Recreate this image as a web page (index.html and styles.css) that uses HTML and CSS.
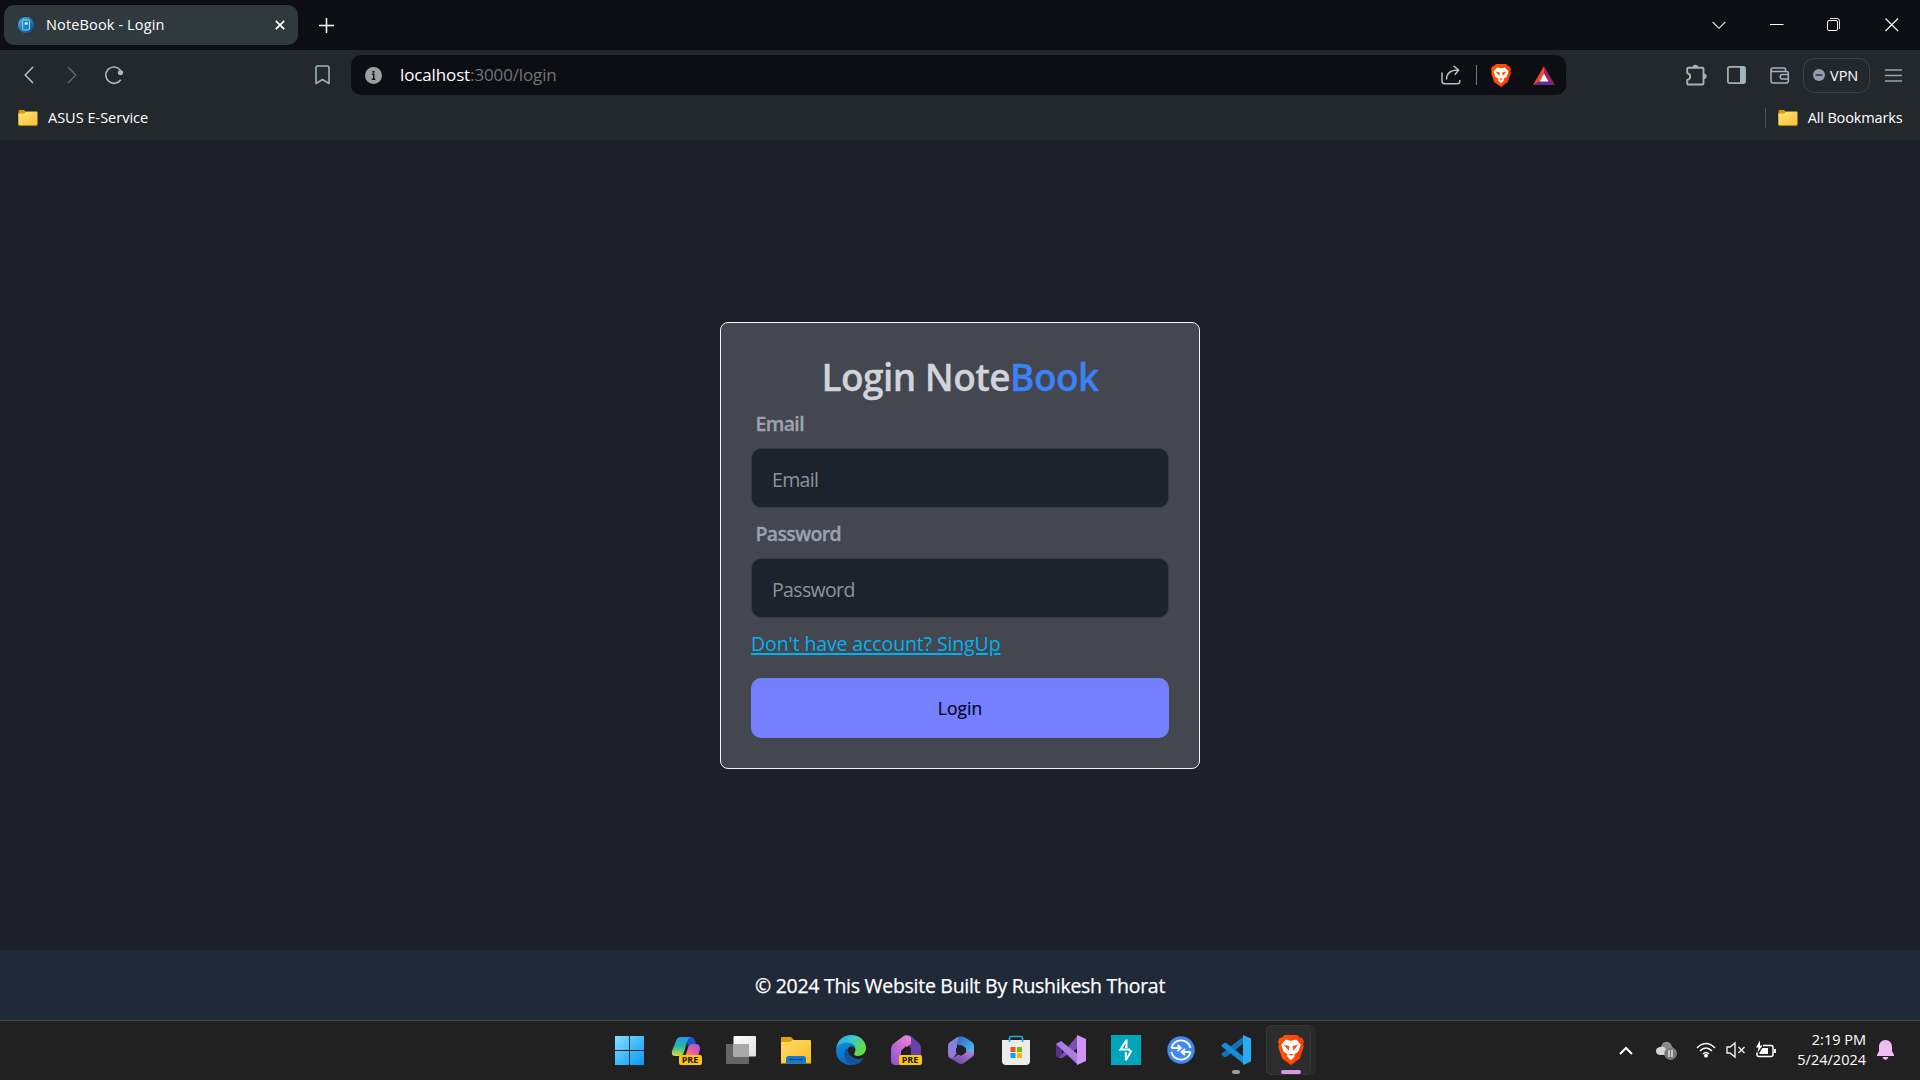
FILE: index.html
```html
<!DOCTYPE html>
<html lang="en">
<head>
<meta charset="utf-8">
<title>NoteBook - Login</title>
<link rel="stylesheet" href="styles.css">
</head>
<body>
<div class="screen">
  <header class="browser">
    <div class="tabstrip">
      <div class="tab">
        <svg class="favicon" width="16" height="16" viewBox="0 0 16 16"><defs><linearGradient id="fav" x1="0" y1="0" x2="1" y2="1"><stop offset="0" stop-color="#45b8ea"/><stop offset="1" stop-color="#05418c"/></linearGradient></defs><circle cx="8" cy="8" r="8" fill="url(#fav)"/><rect x="4.7" y="3" width="6.8" height="10" rx="1" fill="#1686bd" stroke="#8fd6e6"/><rect x="6.7" y="5.3" width="3" height="2.4" fill="#d8f3fa"/></svg>
        <span class="t tab-title">NoteBook - Login</span>
        <svg class="tab-close" width="10" height="10" viewBox="0 0 10 10"><path d="M.8.8l8.4 8.4M9.2.8L.8 9.2" stroke="#fff" stroke-width="1.7"/></svg>
      </div>
      <svg class="new-tab" width="15" height="15" viewBox="0 0 15 15"><path d="M7.5 0v15M0 7.5h15" stroke="#fff" stroke-width="1.5"/></svg>
      <div class="window-controls">
        <svg width="14" height="14" viewBox="0 0 14 14"><path d="M.7 4l6.3 6.3L13.3 4" fill="none" stroke="#e4e4e6" stroke-width="1.1"/></svg>
        <svg width="14" height="14" viewBox="0 0 14 14"><path d="M0 6.5h13.500" stroke="#fff"/></svg>
        <svg width="14" height="14" viewBox="0 0 14 14"><rect x=".5" y="2.5" width="10" height="10" rx="1.5" fill="none" stroke="#fff"/><path d="M3 .5h7q2.500 0 2.500 2.500v8" fill="none" stroke="#e0e0e0"/></svg>
        <svg width="14" height="14" viewBox="0 0 14 14"><path d="M.5.5l12.500 12.500M13 .5L.5 13" stroke="#f4f4f4" stroke-width="1.200"/></svg>
      </div>
    </div>
    <div class="toolbar">
      <svg class="nav-back" width="10" height="18" viewBox="0 0 10 18"><path d="M9 1L1.200 9 9 17" fill="none" stroke="#b0c2cb" stroke-width="1.500"/></svg>
      <svg class="nav-forward" width="10" height="18" viewBox="0 0 10 18"><path d="M1 1l7.800 8L1 17" fill="none" stroke="#5b666c" stroke-width="1.500"/></svg>
      <svg class="nav-reload" width="20" height="20" viewBox="0 0 20 20"><path d="M16.800 14.700A8.200 8.200 0 1 1 16.300 4.900" fill="none" stroke="#a9bac3" stroke-width="1.600"/><circle cx="16.500" cy="7.500" r="2.600" fill="#a9bac3"/></svg>
      <svg class="nav-bookmark" width="15" height="20" viewBox="0 0 15 20"><path d="M1 3Q1 1 3 1h9q2 0 2 2v15.500l-6.500-4L1 18.500z" fill="none" stroke="#a0b2bc" stroke-width="1.600" stroke-linejoin="round"/></svg>
      <div class="address">
        <svg class="info" width="17" height="17" viewBox="0 0 17 17"><circle cx="8.500" cy="8.500" r="8.500" fill="#9d9fa6"/><circle cx="8.500" cy="4.800" r="1.100" fill="#0d0e13"/><path d="M7 7.300h1.700v5M6.800 12.200h3.600" fill="none" stroke="#0d0e13" stroke-width="1.400"/></svg>
        <span class="t url"><span class="url-host">localhost</span>:3000/login</span>
        <svg class="share" width="20" height="20" viewBox="0 0 20 20"><path d="M1 7.500V16q0 2.800 2.800 2.800h12.400q2.600 0 2.600-2.800v-1M5.500 14.500C5.500 8 9 5 17 5M12.500 .8L17.700 5l-3.900 4.800" fill="none" stroke="#b9babd" stroke-width="1.500"/></svg>
        <span class="address-divider"></span>
        <svg class="brave-shield" width="20" height="23" viewBox="0 0 20 23"><use href="#lion"/></svg>
        <svg class="bat" width="22" height="19" viewBox="0 0 22 19"><path d="M11 0L0 19l7-4 4-7z" fill="#ff4724"/><path d="M11 0v8l4 7 7 4z" fill="#9e1f63"/><path d="M0 19l7-4h8l7 4z" fill="#662d91"/><path d="M11 7.500l4.500 8h-9z" fill="#fff"/></svg>
      </div>
      <svg class="puzzle" width="21" height="21" viewBox="0 0 21 21"><path d="M2.200 2.800h14.300q1 0 1 1v14.700q0 1-1 1H2.200q-1 0-1-1v-3.500c4-1 4-6 0-7V3.800q0-1 1-1z" fill="none" stroke="#a2b3bc" stroke-width="1.900" stroke-linejoin="round"/><path d="M6.500 2.600a2.900 2.900 0 0 1 5.800 0zM17.800 8.500a2.800 2.800 0 0 1 0 5.600z" fill="#a2b3bc"/></svg>
      <svg class="panel" width="19" height="18" viewBox="0 0 19 18"><rect x=".9" y=".9" width="17.200" height="16.200" rx="1.500" fill="none" stroke="#a2b3bc" stroke-width="1.700"/><path d="M13 1h5v16h-5z" fill="#a2b3bc"/></svg>
      <svg class="wallet" width="20" height="17" viewBox="0 0 20 17"><path d="M1 3V14q0 2 2 2h13.500q1.800 0 1.800-2V6q0-1.500-1.800-1.500H3Q1 4.500 1 2.700T3 1h11.500q1 0 1 1v2M18.300 7.400h-5.800q-2.300 0-2.300 2.300t2.300 2.300h5.800z" fill="none" stroke="#a2b3bc" stroke-width="1.500" stroke-linejoin="round"/></svg>
      <div class="vpn"><svg width="12" height="12" viewBox="0 0 12 12"><circle cx="6" cy="6" r="6" fill="#9999b3"/><path d="M2.500 6h7" stroke="#23282c" stroke-width="1.400"/></svg><span class="t vpn-label">VPN</span></div>
      <svg class="menu" width="17" height="13" viewBox="0 0 17 13"><path d="M0 1h17M0 6.500h17M0 12h17" stroke="#93a5ae" stroke-width="1.300"/></svg>
    </div>
    <div class="bookmarks">
      <svg width="20" height="17" viewBox="0 0 20 17"><use href="#folder"/></svg>
      <span class="t bm-asus">ASUS E-Service</span>
      <span class="bookmark-divider"></span>
      <svg width="20" height="17" viewBox="0 0 20 17"><use href="#folder"/></svg>
      <span class="t bm-all">All Bookmarks</span>
    </div>
  </header>

  <main class="page">
    <form class="card">
      <h1 class="title">Login Note<span class="accent">Book</span></h1>
      <label class="label label-email" for="email">Email</label>
      <input class="field" id="email" type="text" placeholder="Email">
      <label class="label label-password" for="password">Password</label>
      <input class="field" id="password" type="password" placeholder="Password">
      <a class="t signup" href="#">Don't have account? SingUp</a>
      <button class="submit" type="button">Login</button>
    </form>
  </main>
  <footer class="footer"><span class="t footer-text">© 2024 This Website Built By Rushikesh Thorat</span></footer>

  <nav class="taskbar">
    <div class="apps">
      <span class="app start"><svg width="30" height="30" viewBox="0 0 30 30"><defs><linearGradient id="win" gradientUnits="userSpaceOnUse" x1="0" y1="0" x2="30" y2="30"><stop offset="0" stop-color="#8be2ff"/><stop offset=".5" stop-color="#43bdf9"/><stop offset="1" stop-color="#0a95fb"/></linearGradient></defs><path d="M1 1h14v14H1zM16 1h14v14H16zM1 16h14v14H1zM16 16h14v14H16z" fill="url(#win)"/></svg></span>
      <span class="app"><svg width="30" height="30" viewBox="0 0 30 30"><defs><linearGradient id="copA" x1="0" y1="0" x2="0" y2="1"><stop offset="0" stop-color="#1e9bf0"/><stop offset=".5" stop-color="#2cb6a0"/><stop offset="1" stop-color="#d6dc3a"/></linearGradient><linearGradient id="copB" x1="1" y1="0" x2="0" y2="1"><stop offset="0" stop-color="#9a55ee"/><stop offset=".5" stop-color="#e458a8"/><stop offset="1" stop-color="#ff9862"/></linearGradient></defs><path d="M15 2h4q4 0 5 4l1 3h-4q-3 0-4 3z" fill="#1558cf"/><path d="M10 2h10q-3 1-4 5l-3 10q-1 4-5 4H4q-4 0-3-5L5 6q1-4 5-4z" fill="url(#copA)"/><path d="M21 9h4q4 0 4 5l-2 8H14l3-9q1-4 4-4z" fill="url(#copB)"/></svg><span class="pre">PRE</span></span>
      <span class="app"><svg width="30" height="30" viewBox="0 0 30 30"><defs><linearGradient id="tv" x1="0" y1="0" x2="1" y2="1"><stop offset="0" stop-color="#fff"/><stop offset="1" stop-color="#ddd"/></linearGradient></defs><rect x="0" y="9" width="23" height="20" rx="1" fill="#656565"/><rect x="7.500" y="1" width="22.500" height="20.500" rx="1" fill="url(#tv)"/><path d="M7.500 9H23v12.500H7.500z" fill="#a9a9a9"/></svg></span>
      <span class="app"><svg width="30" height="30" viewBox="0 0 30 30"><defs><linearGradient id="fe" x1="0" y1="0" x2="1" y2="1"><stop offset="0" stop-color="#ffdc6c"/><stop offset="1" stop-color="#fbbb20"/></linearGradient></defs><path d="M0 3q0-1 1-1h9l3 3-3 5H0z" fill="#dfa006"/><path d="M0 7h9l3-2h17q1 0 1 1v22.500H0z" fill="url(#fe)"/><path d="M5 28.500V24q0-3 3-3h14q3 0 3 3v4.500z" fill="#0f78d1"/><path d="M8.500 24.500h13" stroke="#08447f" stroke-width="1.300"/></svg></span>
      <span class="app"><svg width="30" height="30" viewBox="0 0 30 30"><defs><linearGradient id="edA" x1="0" y1="0" x2="1" y2=".5"><stop offset="0" stop-color="#20a4e3"/><stop offset=".45" stop-color="#35c5d6"/><stop offset="1" stop-color="#69dc43"/></linearGradient><linearGradient id="edB" x1="0" y1="0" x2=".4" y2="1"><stop offset="0" stop-color="#138dd8"/><stop offset="1" stop-color="#0767c2"/></linearGradient></defs><path d="M.3 14C1 5 7.500 0 15 0c9 0 15 6 15 13 0 5-4 8-8.500 8-3 0-4-1.500-3-3 3-5-1-9-7-9S1 12 .3 14z" fill="url(#edA)"/><path d="M.2 14.500C1 10 6 7.500 11 7.500c5.500 0 8.500 3.200 8.500 6.500-1-2-3-3-5-2.500-3 1-4.500 5-3 9 2 5 8 7 13.500 4.500-2 3.500-6 5-10 5C6 30-.8 23 .2 14.500z" fill="url(#edB)"/><path d="M11 13c-5 4-3 14 5 17 5 0 9-2 11.500-7-4 2-9 1-12-1.500-3-2.500-4-5.500-4.500-8.500z" fill="#12539a"/></svg></span>
      <span class="app"><svg width="30" height="30" viewBox="0 0 30 30"><defs><linearGradient id="dh" x1="1" y1="0" x2="0" y2="1"><stop offset="0" stop-color="#f287d8"/><stop offset="1" stop-color="#8b50d0"/></linearGradient></defs><path d="M17 0q2 0 3.500 1.500L28 8q2 2 2 5v16H20V13L13 5z" fill="#6941aa"/><path d="M12 1.500q4-3 8 1v6l-9 8V30H4q-4 0-4-4V14q0-3 2-5z" fill="url(#dh)"/><path d="M10 16l5-5 5 5v6H10z" fill="#211e25"/></svg><span class="pre">PRE</span></span>
      <span class="app"><svg width="30" height="30" viewBox="0 0 30 30"><defs><linearGradient id="mA" x1="0" y1="0" x2="1" y2="1"><stop offset="0" stop-color="#2b5fc4"/><stop offset="1" stop-color="#52d0f5"/></linearGradient><linearGradient id="mB" x1="0" y1="1" x2="1" y2="0"><stop offset="0" stop-color="#5c3b98"/><stop offset="1" stop-color="#bb86dc"/></linearGradient></defs><path d="M10 3Q15-.5 20 3l6 4q2 1 2 4v6q-1 4-5 5l-4-8-8-5z" fill="url(#mA)"/><path d="M10 3q2-1 3-1-2 3-2 7v9l-5 6-2-1q-2-1-2-4v-8q0-3 2-4z" fill="#8f7cdc"/><path d="M2 20q1 3 4 3l12-6 10-1v3q0 2-2 3l-8 6q-3 2-6 0l-8-5q-2-1-2-3z" fill="url(#mB)"/><path d="M15 10l5 3v4.500L15 21l-5-3.500V13z" fill="#202027"/></svg></span>
      <span class="app"><svg width="30" height="30" viewBox="0 0 30 30"><path d="M1 5h28v21q0 4-4 4H5q-4 0-4-4z" fill="#ececec"/><path d="M8.500 7V3q0-1.500 1.500-1.500h10q1.500 0 1.500 1.500v4" fill="none" stroke="#27a5e2" stroke-width="1.700"/><path d="M9.500 12h5v5h-5z" fill="#f25022"/><path d="M16 12h5v5h-5z" fill="#7fba00"/><path d="M9.500 18h5v5h-5z" fill="#00a4ef"/><path d="M16 18h5v5h-5z" fill="#ffb900"/></svg></span>
      <span class="app"><svg width="30" height="30" viewBox="0 0 30 30"><path d="M0 9l3-2 3 1v14l-3 1-3-2z" fill="#533484"/><path d="M3 23l18-22 3 3v8L6 23z" fill="#7650b5"/><path d="M0 9l5-3 19 15v5l-3 3z" fill="#ab7be0"/><path d="M21 0l9 4v22l-9 4z" fill="#d094fa"/></svg></span>
      <span class="app"><svg width="30" height="30" viewBox="0 0 30 30"><path d="M0 0h30v30H0z" fill="#00a5bc"/><path d="M15.500 4.500v7.500h-1.500M15.500 5L9.500 14.500h9.500M14.800 25.500V17M15 25l5-8.500-3-2.500" fill="none" stroke="#fff" stroke-width="2"/></svg></span>
      <span class="app"><svg width="30" height="30" viewBox="0 0 30 30"><circle cx="15" cy="15" r="13.700" fill="#4387f2"/><path d="M5.300 13a10 10 0 0 1 19.400 0M24.700 17a10 10 0 0 1-19.400 0M5.300 13h10M11.500 10l3.500 3-3.500 3M24.700 17h-9M19 14l-3.500 3 3.500 3" fill="none" stroke="#fff" stroke-width="1.800"/></svg></span>
      <span class="app"><svg width="30" height="30" viewBox="0 0 30 30"><path d="M0 19l3 3 2 .3L23 8V1z" fill="#1272b5"/><path d="M0 11l3-3 2-.300L23 22v7z" fill="#168dd5"/><path d="M22 0l8 3.500v23L22 30z" fill="#29aaf2"/></svg><span class="running"></span></span>
      <span class="app active"><svg width="26" height="30" viewBox="0 0 20 23"><use href="#lion"/></svg><span class="focused"></span></span>
    </div>
    <div class="tray">
      <svg class="tray-up" width="14" height="9" viewBox="0 0 14 9"><path d="M1 8l6-6 6 6" fill="none" stroke="#fff" stroke-width="2"/></svg>
      <svg class="tray-cloud" width="21" height="19" viewBox="0 0 21 19"><path d="M5 6C6-1 15-1 16 6q2 1 2 5H6z" fill="#8b8b8b"/><path d="M5 14q-5 0-5-4 0-3.500 4-4 4-1 6 2l5 6z" fill="#d6d6d6"/><circle cx="14.500" cy="12.500" r="6" fill="#777" stroke="#909090" stroke-width=".7"/><path d="M13 9v7M16 9v7" stroke="#fff" stroke-width="1.200"/></svg>
      <svg class="tray-wifi" width="20" height="16" viewBox="0 0 20 16"><path d="M1 6q9-9 18 0M4 9q6-6 12 0M7 12q3-3 6 0" fill="none" stroke="#fff" stroke-width="1.600"/><circle cx="10" cy="13.700" r="1.900" fill="#fff"/></svg>
      <svg class="tray-sound" width="20" height="16" viewBox="0 0 20 16"><path d="M1 5h3l5-4v14l-5-4H1zM12.500 5l6 6M18.500 5l-6 6" fill="none" stroke="#eee" stroke-width="1.400"/></svg>
      <svg class="tray-battery" width="20" height="17" viewBox="0 0 20 17"><path d="M7 3.500h8q2 0 2 2v7q0 2-2 2H3q-2 0-2-2v-2" fill="none" stroke="#fff" stroke-width="1.500"/><path d="M6.500 6H12v6H3.500v-1.500zM18 7h2v4h-2zM4-1.500L0 5.500h2.500l-1 5L6.500 3.500H4z" fill="#fff"/></svg>
      <div class="clock"><span class="t">2:19 PM</span><span class="t">5/24/2024</span></div>
      <svg class="tray-bell" width="17" height="20" viewBox="0 0 17 20"><path d="M8.500 0c4 0 6.500 3 6.500 7v4l2 4v1H0v-1l2-4V7c0-4 2.500-7 6.500-7zM5.500 17h6q-1 3-3 3t-3-3z" fill="#f0bdf3"/></svg>
    </div>
  </nav>
</div>

<svg class="symbols" width="0" height="0">
  <defs>
    <linearGradient id="fold" x1="0" y1="0" x2="1" y2="1"><stop offset="0" stop-color="#ffe47a"/><stop offset="1" stop-color="#fdbf35"/></linearGradient>
    <linearGradient id="brave" x1="0" y1="0" x2="1" y2="0"><stop offset="0" stop-color="#ff5601"/><stop offset="1" stop-color="#ff3a06"/></linearGradient>
    <g id="folder"><path d="M.5 1.500Q.5 0 1.500 0H6l2 2v3H.5z" fill="#dc9a05"/><path d="M.3 3.500h6L8 1.500h10.500q1 0 1 1v11.800q0 1.200-1.200 1.200H1.500q-1.200 0-1.200-1.200z" fill="url(#fold)"/><path d="M1 15.600h18" stroke="#b8850f" stroke-width=".8"/></g>
    <g id="lion"><path d="M5 0h10l2 2h1.500L20 5l-.7 2 .5 2-3 9-6.800 5-6.800-5-3-9 .5-2L0 5l1.500-3H3z" fill="url(#brave)"/><path d="M6 3.500l4 .8 4-.8 3.500 4-1.800 5.200-3 2 .2 1.800L10 19.500 7.100 16.500l.2-1.800-3-2L2.500 7.500z" fill="#fff"/><path d="M4.500 7.500l4.300 1-.5 3.500zM15.500 7.500l-4.300 1 .5 3.500zM7.800 14.500h4.400L10 16z" fill="#ff4b05"/></g>
  </defs>
</svg>
</body>
</html>
```
FILE: styles.css
```css
* { box-sizing: border-box; }
body { margin: 0; background: #1d2028; color: #fff; font-family: "Open Sans", "Noto Sans", sans-serif; overflow: hidden; }
svg { display: block; flex: none; overflow: visible; }
.symbols { position: absolute; }
.t { white-space: nowrap; }
.screen { width: 1920px; height: 1080px; display: flex; flex-direction: column; }

.browser { height: 141px; background: #23282c; border-bottom: 1px solid #202429; }
.tabstrip { height: 50px; display: flex; align-items: center; background: #0d0e13; padding-left: 4px; }
.tab { width: 294px; height: 40px; border-radius: 10px; background: #30393e; display: flex; align-items: center; padding: 0 13px 0 14px; }
.tab-title { margin-left: 12px; font-size: 14.5px; line-height: 20px; letter-spacing: .14px; }
.tab-close { margin-left: auto; }
.new-tab { margin-left: 21px; }
.window-controls { margin-left: auto; margin-top: -1px; display: flex; gap: 43.5px; padding-right: 21.5px; }

.toolbar { height: 50px; display: flex; align-items: center; }
.nav-back { margin-left: 24px; }
.nav-forward { margin-left: 33px; }
.nav-reload { margin-left: 27px; }
.nav-bookmark { margin-left: 191px; }
.address { width: 1215px; height: 40px; margin-left: 21px; border-radius: 10px; background: #0d0e13; display: flex; align-items: center; padding: 0 11px 0 14px; }
.url { margin-left: 18px; font-size: 17px; line-height: 24px; letter-spacing: -.13px; color: #727479; }
.url-host { color: #fff; }
.share { margin-left: auto; }
.address-divider { width: 1px; height: 20px; margin: 0 14px 0 15px; background: #75777b; }
.bat { margin-left: 22px; }
.puzzle { margin-left: 120px; }
.panel { margin-left: 20px; }
.wallet { margin-left: 24px; }
.vpn { width: 67px; height: 35px; margin-left: 13px; border: 1px solid #3a4549; border-radius: 11px; display: flex; align-items: center; gap: 5px; padding-left: 9px; }
.vpn-label { font-size: 14.5px; }
.menu { margin-left: 15px; }

.bookmarks { height: 40px; display: flex; align-items: center; padding: 0 17.5px 4px 18px; gap: 10px; font-size: 14.5px; line-height: 20px; }
.bm-all { letter-spacing: -.14px; }
.bookmark-divider { width: 1px; height: 20px; margin-left: auto; margin-right: 2px; background: #4c5256; }

.page { height: 809px; display: flex; align-items: flex-start; justify-content: center; padding-top: 181px; }
.card { width: 480px; height: 447px; border: 1px solid #f4f4f5; border-radius: 8px; background: #444650; padding: 30px; display: flex; flex-direction: column; }
.title { margin: 0; height: 50px; line-height: 47px; font-size: 37px; font-weight: 600; letter-spacing: -.55px; text-align: center; color: #d1d5db; -webkit-text-stroke: .3px; }
.accent { color: #3b82f6; }
.label { line-height: 41px; padding-left: 4.5px; font-size: 19.5px; font-weight: 600; letter-spacing: -.65px; color: #9ca3af; -webkit-text-stroke: .3px; }
.label-email { height: 45px; }
.label-password { height: 50px; padding-top: 5px; }
.field { height: 60px; flex: none; border: 1px solid #353b45; border-radius: 10px; background: #1d232a; padding: 2px 20px 0; font: 19.5px "Open Sans", sans-serif; letter-spacing: -.65px; color: #a6adbb; }
.field::placeholder { color: #8d939e; opacity: 1; }
.signup { align-self: flex-start; font-size: 19.5px; line-height: 30px; letter-spacing: -.12px; margin-top: 11px; color: #00b3f0; text-decoration-thickness: 2px; text-underline-offset: 2px; }
.submit { height: 60px; margin-top: 19px; border: 0; border-radius: 10px; background: #7480ff; color: #050617; font: 17.5px "Open Sans", sans-serif; -webkit-text-stroke: .2px; }

.footer { height: 70px; display: flex; align-items: center; justify-content: center; background: #1f2937; font-size: 19.5px; font-weight: 500; letter-spacing: -.28px; -webkit-text-stroke: .25px #fff; }

.taskbar { height: 60px; border-top: 1px solid #474747; background: #212121; display: flex; align-items: flex-start; padding: 4px 0 0 603.5px; }
.apps { display: flex; }
.app { position: relative; width: 55px; height: 50px; display: flex; align-items: center; justify-content: center; }
.start { padding-right: 4px; }
.pre { position: absolute; left: 20px; bottom: 10px; width: 23px; height: 10px; border-radius: 2px; background: #ffc50a; color: #191400; font: 700 9px/10px "Open Sans", sans-serif; text-align: center; }
.running { position: absolute; left: 23.5px; bottom: 1px; width: 8px; height: 4px; border-radius: 2px; background: #9b9b9b; }
.active { width: 45px; margin-left: 2.5px; border: 1px solid #363636; border-radius: 5px; background: #2d2d2d; box-shadow: 5px 0 0 #292929; }
.active svg { margin-left: 4px; }
.focused { position: absolute; left: 14px; bottom: 0; width: 20px; height: 4px; border-radius: 2px; background: #d69ae0; }
.tray { height: 50px; margin-left: auto; display: flex; align-items: center; padding-right: 26px; }
.tray-cloud { margin-left: 23px; }
.tray-wifi { margin-left: 19px; }
.tray-sound { margin-left: 10px; }
.tray-battery { margin-left: 10px; }
.clock { width: 90px; margin-top: -1px; display: flex; flex-direction: column; align-items: flex-end; font-size: 14.5px; line-height: 20px; }
.tray-bell { margin-left: 11px; }
```
